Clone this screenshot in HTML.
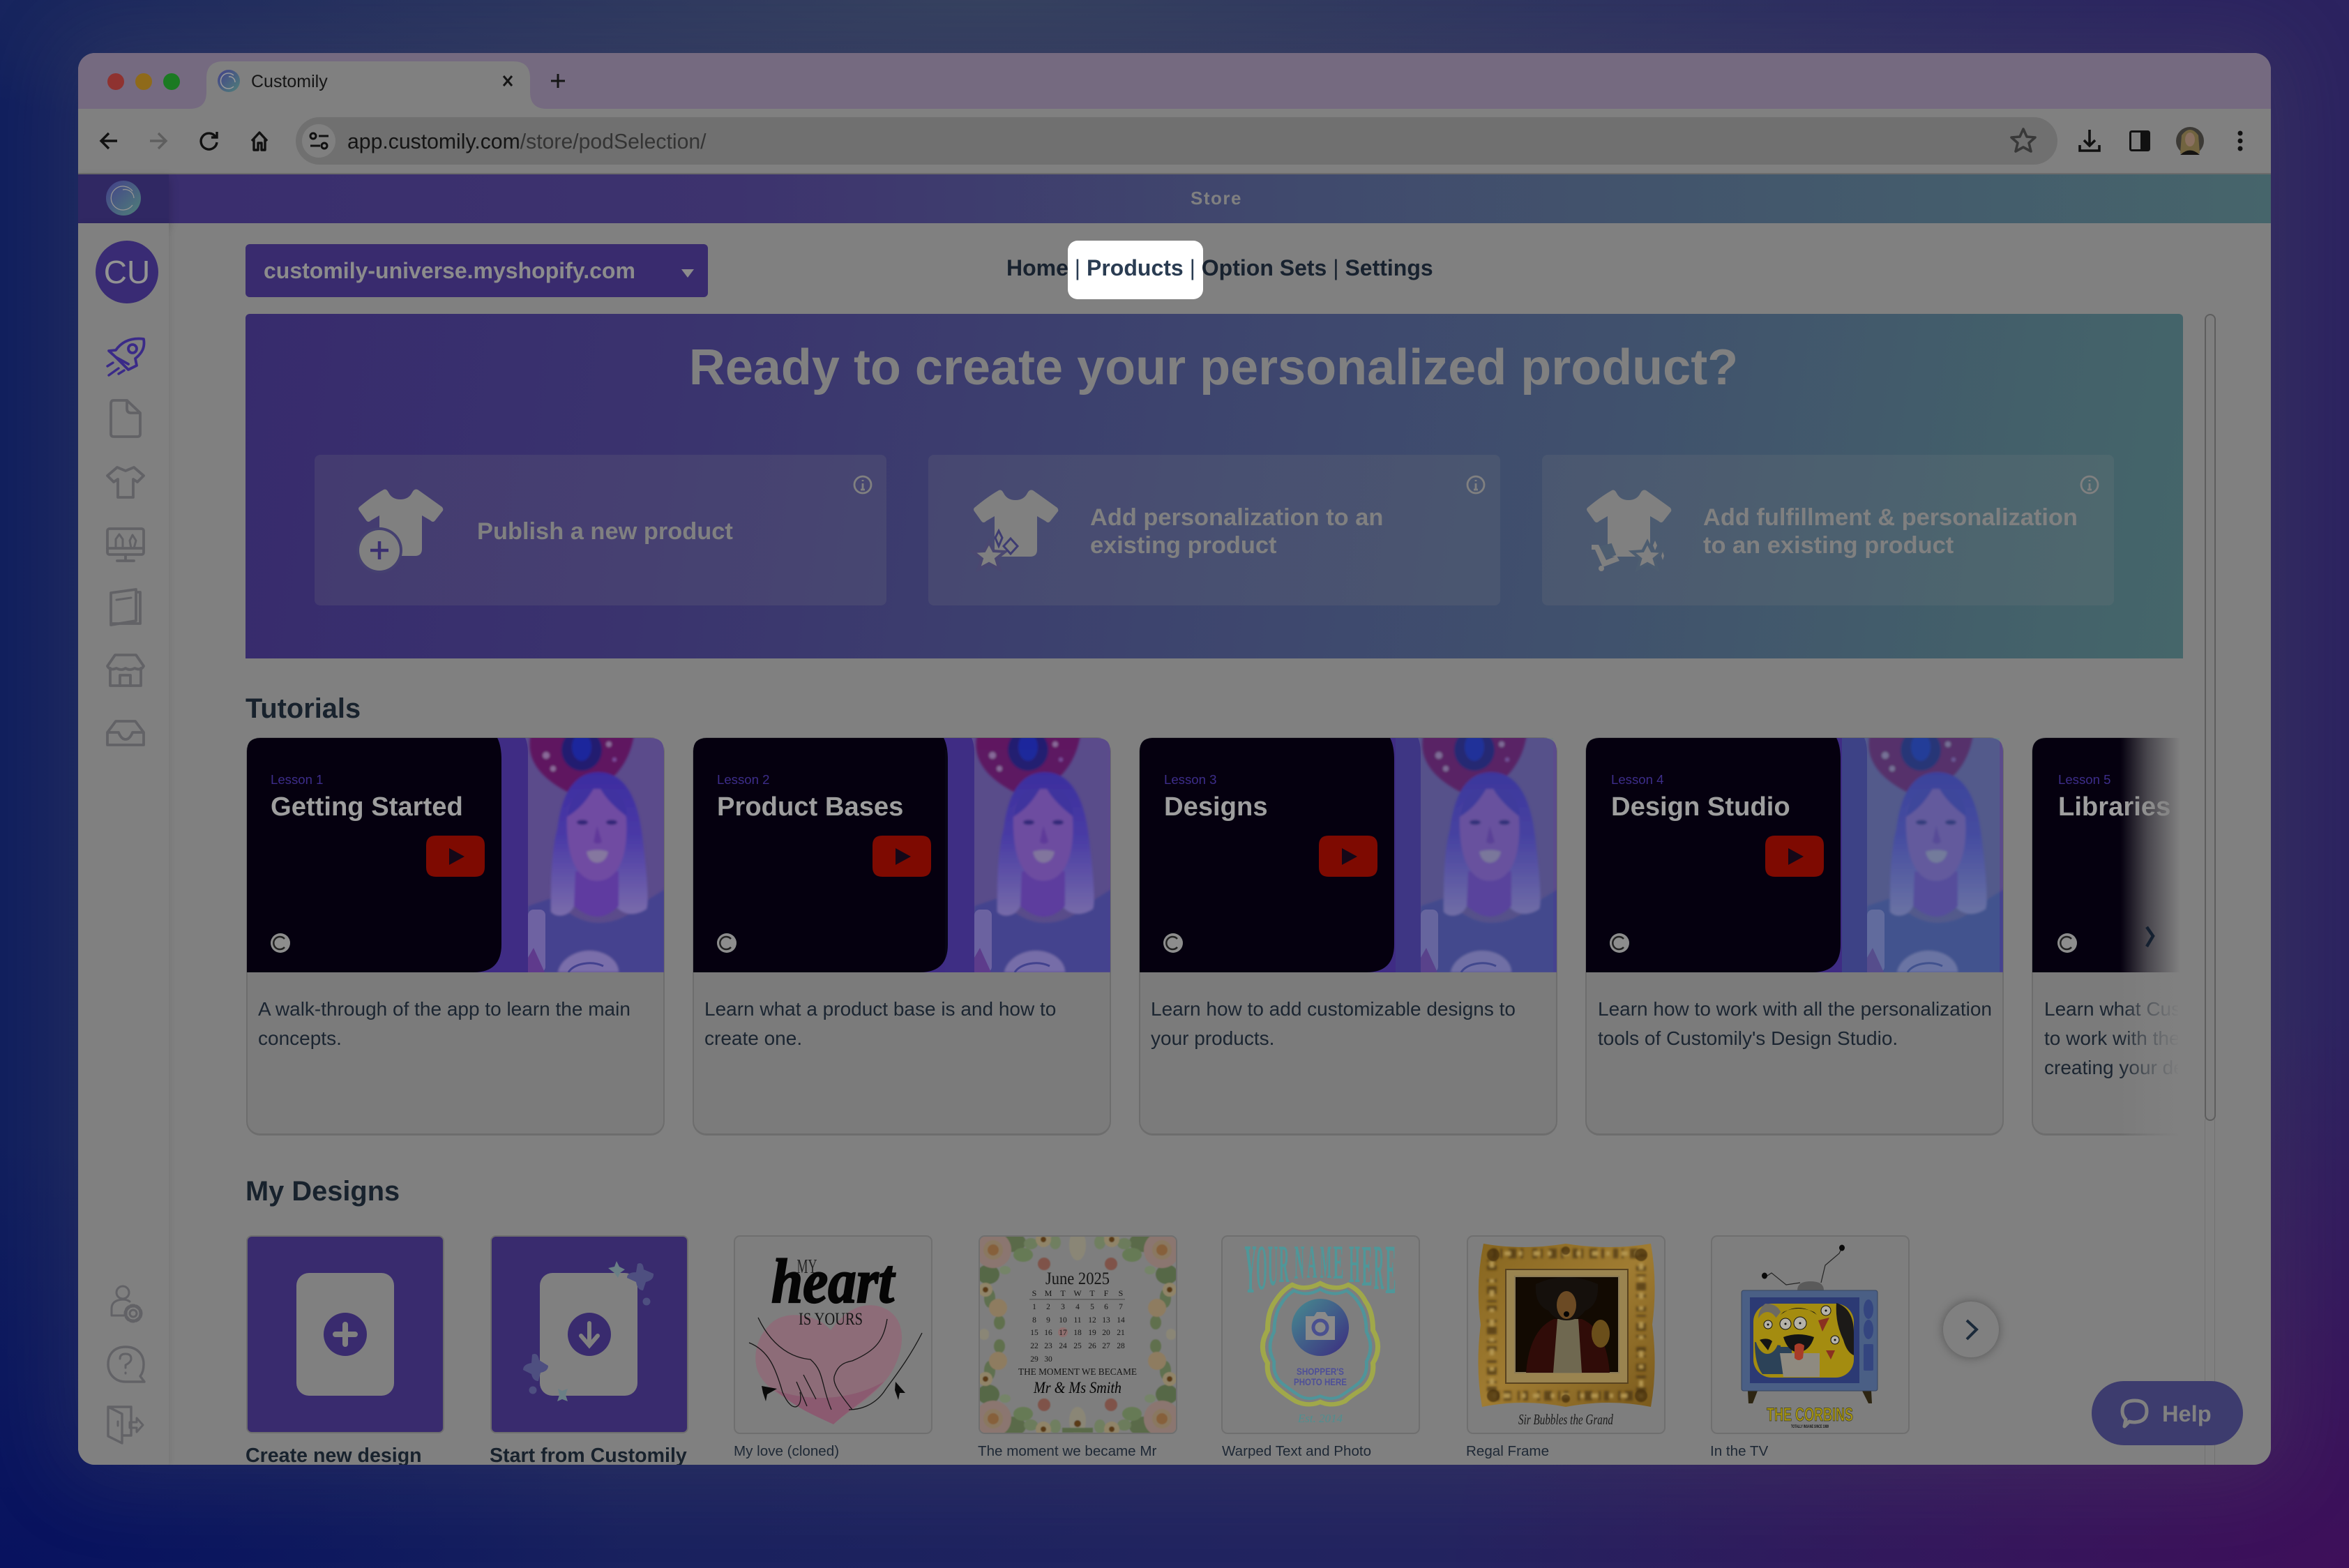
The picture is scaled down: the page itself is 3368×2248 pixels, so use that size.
<!DOCTYPE html>
<html lang="en"><head><meta charset="utf-8"><title>Customily</title>
<style>
html,body{margin:0;padding:0;width:3368px;height:2248px;overflow:hidden}
body{position:relative;font-family:"Liberation Sans",Arial,sans-serif;background:
radial-gradient(900px 620px at 0% 100%,#08125f 0%,rgba(8,18,95,0) 100%),
radial-gradient(1300px 800px at 100% 100%,#3e0f5a 0%,rgba(62,15,90,0) 100%),
radial-gradient(1700px 260px at 42% 0%,#34405f 0%,rgba(52,64,95,0) 100%),
linear-gradient(90deg,#111f5e 0%,#212460 50%,#2c2360 100%)}
.win{position:absolute;left:112px;top:76px;width:3144px;height:2024px;border-radius:24px;overflow:hidden;box-shadow:0 0 120px 24px rgba(105,105,105,.2)}
.in{position:absolute;left:-112px;top:-76px;width:3368px;height:2248px;background:#808080}
.a{position:absolute;white-space:nowrap}
.card{position:absolute;top:1057px;width:596px;height:566px;border:2px solid #6d6d6d;border-bottom-width:3px;border-radius:20px;background:#7b7b7b}
.d{font-size:28px;line-height:42px;color:#1b2531}
.lt{font-size:18.6px;line-height:24px;color:#3d2d8a}
.tt{font-size:38.2px;font-weight:bold;line-height:46px;color:#9e9e9e}
.h2{font-size:39.8px;font-weight:bold;line-height:50px;color:#18222d}
.hc{position:absolute;top:652px;width:820px;height:216px;background:rgba(128,128,128,.17);border-radius:8px}
.ht{font-size:34.4px;font-weight:bold;line-height:40px;color:#808080}
.lb{font-size:20.6px;line-height:28px;color:#1e2835}
.lbb{font-size:28.6px;font-weight:bold;line-height:36px;color:#18222d}
</style></head><body>
<div class="win"><div class="in">

<!-- chrome -->
<div class="a" style="left:112px;top:76px;width:3144px;height:80px;background:#756a80"></div>
<div class="a" style="left:112px;top:156px;width:3144px;height:92px;background:#808080;border-radius:16px 16px 0 0"></div>
<div class="a" style="left:112px;top:248px;width:3144px;height:2px;background:#6c6c6c"></div>
<div class="a" style="left:424px;top:168px;width:2526px;height:68px;background:#707070;border-radius:34px"></div>
<div class="a" style="left:433px;top:178px;width:48px;height:48px;background:#808080;border-radius:50%"></div>

<!-- store bar -->
<div class="a" style="left:112px;top:250px;width:3144px;height:70px;background:linear-gradient(90deg,#392d6e 0%,#3d336e 30%,#40496d 55%,#43586c 78%,#46656b 100%)"></div>
<div class="a" style="left:112px;top:250px;width:130px;height:70px;background:#302863;box-shadow:0 6px 14px rgba(0,0,0,.2)"></div>
<div class="a" style="left:1600px;top:264px;width:288px;text-align:center;font-size:26px;letter-spacing:1.5px;font-weight:bold;line-height:40px;color:#808080">Store</div>

<!-- sidebar -->
<div class="a" style="left:112px;top:320px;width:130px;height:1780px;background:#808080;box-shadow:2px 0 8px rgba(0,0,0,.08)"></div>
<div class="a" style="left:137px;top:345px;width:90px;height:90px;border-radius:50%;background:#392b74;color:#939393;font-size:46px;line-height:90px;text-align:center">CU</div>

<!-- store select -->
<div class="a" style="left:352px;top:350px;width:663px;height:76px;background:#392b6e;border-radius:6px"></div>
<div class="a" style="left:378px;top:367px;font-size:32px;font-weight:bold;line-height:42px;color:#8c8c8c">customily-universe.myshopify.com</div>
<div class="a" style="left:977px;top:386px;width:0;height:0;border-left:9px solid transparent;border-right:9px solid transparent;border-top:12px solid #8c8c8c"></div>

<!-- nav -->
<div class="a" style="left:1531px;top:345px;width:194px;height:84px;background:#fff;border-radius:14px"></div>
<div class="a" style="left:1443px;top:364px;font-size:32px;font-weight:bold;line-height:40px;color:#18222f">Home <span style="font-weight:normal;color:#2a3c52">|</span> <span style="color:#2a3c52">Products</span> <span style="font-weight:normal;color:#2a3c52">|</span> Option Sets <span style="font-weight:normal">|</span> Settings</div>

<!-- hero -->
<div class="a" style="left:352px;top:450px;width:2778px;height:494px;border-radius:6px 6px 0 0;background:linear-gradient(100deg,#372b6d 0%,#3a336e 22%,#3d446e 48%,#40516d 70%,#43606a 90%,#45666a 100%)"></div>
<div class="a" style="left:352px;top:487px;width:2776px;text-align:center;font-size:72px;font-weight:bold;line-height:80px;color:#808080">Ready to create your personalized product?</div>
<div class="hc" style="left:451px"></div><div class="hc" style="left:1331px"></div><div class="hc" style="left:2211px"></div>
<div class="a ht" style="left:684px;top:742px">Publish a new product</div>
<div class="a ht" style="left:1563px;top:722px">Add personalization to an<br>existing product</div>
<div class="a ht" style="left:2442px;top:722px">Add fulfillment &amp; personalization<br>to an existing product</div>

<!-- tutorials -->
<div class="a h2" style="left:352px;top:991px">Tutorials</div>
<div class="card" style="left:353px"></div><div class="card" style="left:993px"></div><div class="card" style="left:1633px"></div><div class="card" style="left:2273px"></div>
<div class="card" style="left:2913px;width:212px;border-right:none;border-radius:20px 0 0 20px"></div>

<!-- my designs -->
<div class="a h2" style="left:352px;top:1683px">My Designs</div>
<div class="a" style="left:353px;top:1771px;width:280px;height:280px;border:2px solid #6e6e6e;border-radius:8px;background:#392b6e"></div>
<div class="a" style="left:703px;top:1771px;width:280px;height:280px;border:2px solid #6e6e6e;border-radius:8px;background:#392b6e"></div>
<div class="a" style="left:425px;top:1825px;width:140px;height:176px;background:#808080;border-radius:18px"></div>
<div class="a" style="left:774px;top:1825px;width:140px;height:176px;background:#808080;border-radius:18px"></div>

<!-- all graphics -->
<svg class="a" style="left:0;top:0" width="3368" height="2248" viewBox="0 0 3368 2248" xmlns="http://www.w3.org/2000/svg" font-family="Liberation Sans, Arial, sans-serif">
<defs>
<filter id="soft" x="-10%" y="-10%" width="120%" height="120%"><feGaussianBlur stdDeviation="1.6"/></filter>
<filter id="soft2" x="-10%" y="-10%" width="120%" height="120%"><feGaussianBlur stdDeviation=".7"/></filter>
<clipPath id="cardclip"><rect x="2" y="2" width="281" height="281" rx="7"/></clipPath>
<linearGradient id="hairg" x1="0" y1="0" x2="0" y2="1"><stop offset="0" stop-color="#3c2ca0"/><stop offset=".45" stop-color="#4a3aa6"/><stop offset="1" stop-color="#7a6cab"/></linearGradient>
<linearGradient id="favg" x1="0" y1="0" x2="1" y2="1"><stop offset="0" stop-color="#43408a"/><stop offset="1" stop-color="#4f8078"/></linearGradient>
<linearGradient id="camg" x1="0" y1="0" x2="1" y2="1"><stop offset="0" stop-color="#478c90"/><stop offset="1" stop-color="#3b2c80"/></linearGradient>
<linearGradient id="goldg" x1="0" y1="0" x2="1" y2="1"><stop offset="0" stop-color="#86651f"/><stop offset=".5" stop-color="#a07c32"/><stop offset="1" stop-color="#7a5a1c"/></linearGradient>
<symbol id="thumb" viewBox="1 -1 598 336" width="598" height="336" overflow="hidden">
 <rect y="-1" width="600" height="336" fill="#5b4b8b"/>
 <g filter="url(#soft)">
 <path d="M408 -6C398 40 438 66 472 82C505 78 548 50 556 -6Z" fill="#5f1460"/>
 <ellipse cx="481" cy="16" rx="29" ry="30" fill="#241a70"/><ellipse cx="481" cy="12" rx="14" ry="20" fill="#1f259c"/>
 <circle cx="430" cy="24" r="5" fill="#8a6a9a"/><circle cx="440" cy="43" r="4" fill="#8a6a9a"/><circle cx="520" cy="8" r="4" fill="#8a6a9a"/><circle cx="528" cy="30" r="3" fill="#7a4a9a"/>
 <path d="M404 240L440 228Q470 264 505 264Q540 264 565 238L600 216V335H404Z" fill="#44428f"/>
 <path d="M437 248C436 190 440 150 446 130C452 80 470 48 505 48C545 48 562 90 568 140C574 190 578 230 574 244C560 254 540 254 530 240L470 240C465 254 445 258 437 248Z" fill="url(#hairg)"/>
 <path d="M472 190H534V240Q505 270 470 240Z" fill="#5e3aa0"/>
 <path d="M460 110C462 85 478 72 503 72C530 72 543 90 545 115C548 165 535 204 503 204C472 204 458 165 460 110Z" fill="#6f4ba2"/>
 <path d="M460 112C480 100 490 85 498 72C480 70 462 84 460 112Z" fill="#4030a0"/>
 <path d="M546 112C530 100 515 85 508 72C530 70 544 84 546 112Z" fill="#4030a0"/>
 <ellipse cx="482" cy="120" rx="8" ry="3.5" fill="#302878"/><ellipse cx="524" cy="120" rx="8" ry="3.5" fill="#302878"/>
 <path d="M503 125L498 148Q504 153 510 148Z" fill="#60389a"/>
 <path d="M488 162Q504 157 519 162Q516 177 503 178Q491 177 488 162Z" fill="#85779f"/>
 <path d="M447 335C450 318 470 304 492 304C515 304 534 318 534 335Z" fill="#7a6eaa"/>
 </g>
 <rect x="404" y="245" width="25" height="90" rx="8" fill="#6e62a2"/>
 <path d="M462 335C470 322 495 318 512 326" fill="none" stroke="#43418f" stroke-width="3"/>
 <path d="M392 335L412 300L428 335Z" fill="#5f3a8c"/>
 <path d="M-20 -20H364Q404 -20 404 20V335H-20Z" fill="#3f2c84"/>
 <path d="M-20 -20H326Q366 -20 366 30V295Q366 335 326 335H-20Z" fill="#05000f"/>
 <path d="M272 139H328Q342 139 342 153V184Q342 198 328 198H272Q258 198 258 184V153Q258 139 272 139Z" fill="#7e0a01"/>
 <path d="M291 157L313 169L291 181Z" fill="#140818"/>
 <circle cx="49" cy="293" r="14" fill="#8d8d8d"/><path d="M55 287A9 9 0 1 0 55 299" fill="none" stroke="#222" stroke-width="2.5"/>
 <path d="M1 -1H20Q1 -1 1 18Z" fill="#808080"/><path d="M599 -1V18Q599 -1 580 -1Z" fill="#808080"/>
</symbol>
<g id="fq">
 <ellipse cx="48" cy="10" rx="20" ry="14" fill="#5a6a48"/><ellipse cx="64" cy="28" rx="14" ry="10" fill="#667a54"/><ellipse cx="14" cy="56" rx="16" ry="14" fill="#566846"/><ellipse cx="16" cy="90" rx="8" ry="14" fill="#5e7050"/><ellipse cx="30" cy="125" rx="8" ry="10" fill="#60704e"/><ellipse cx="75" cy="12" rx="10" ry="8" fill="#6c7c5c"/><ellipse cx="110" cy="10" rx="8" ry="10" fill="#6f7f60"/><ellipse cx="38" cy="50" rx="8" ry="6" fill="#748468"/>
 <circle cx="21" cy="21" r="26" fill="#8b7670"/><circle cx="21" cy="21" r="14" fill="#8a7860"/><circle cx="21" cy="21" r="8" fill="#86603a"/>
 <circle cx="93" cy="6" r="11" fill="#908468"/><circle cx="93" cy="6" r="4" fill="#5a3a18"/><circle cx="10" cy="78" r="10" fill="#908468"/><circle cx="10" cy="78" r="4" fill="#5a3a18"/>
 <circle cx="94" cy="41" r="9" fill="#7f5248"/><circle cx="28" cy="104" r="13" fill="#8e7c60"/><circle cx="8" cy="141" r="7" fill="#8a8676"/>
</g>
<path id="star" d="M0 -20L6 -7L20 -6L9 4L13 19L0 11L-13 19L-9 4L-20 -6L-6 -7Z"/>
<path id="shirt" d="M36 1Q40 -1 43 5Q48 15 60 15Q72 15 77 5Q80 -1 85 1Q95 8 120 26Q122 29 121 31L110 45Q107 49 103 45L91 38V86Q91 96 81 96H30V38L18 45Q14 49 11 45L1 31Q-1 28 1 26Q20 10 36 1Z"/>
</defs>

<!-- window chrome graphics -->
<path d="M112 156H272Q296 156 296 132V112Q296 88 320 88H736Q760 88 760 112V132Q760 156 784 156H800V160H112Z" fill="#808080"/>
<circle cx="166" cy="117" r="12" fill="#8f3230"/><circle cx="206" cy="117" r="12" fill="#8f6a1a"/><circle cx="246" cy="117" r="12" fill="#1b7a22"/>
<circle cx="328" cy="116" r="16" fill="url(#favg)"/><path d="M335 108A11 11 0 1 0 335 124M328 110A8 8 0 0 1 337 118" fill="none" stroke="#9a9a9a" stroke-width="1.5"/>
<text x="360" y="125" font-size="25" fill="#151515">Customily</text>
<path d="M722 109L734 123M734 109L722 123" stroke="#151515" stroke-width="3"/>
<path d="M800 106V126M790 116H810" stroke="#151515" stroke-width="3"/>
<g fill="none" stroke="#111" stroke-width="3.4">
<path d="M168 202H146M156 191L145 202L156 213"/>
<path d="M215 202H237M227 191L238 202L227 213" stroke="#5e5e5e"/>
<path d="M309 196A11.5 11.5 0 1 0 311 204M311 189V197H303"/>
<path d="M361 202L372 190L383 202M364 199V215H370V205H375V215H380V199" stroke-linejoin="round"/>
<circle cx="449" cy="195" r="4" stroke-width="3"/><path d="M457 195H471M445 209H459" stroke-width="3"/><circle cx="465" cy="209" r="4" stroke-width="3"/>
</g>
<text x="498" y="213" font-size="30.2" fill="#141414">app.customily.com<tspan fill="#343434">/store/podSelection/</tspan></text>
<polygon points="2901,185 2906,196 2918,197 2909,205 2912,217 2901,211 2890,217 2893,205 2884,197 2896,196" fill="none" stroke="#383838" stroke-width="3.6" stroke-linejoin="round"/>
<g fill="none" stroke="#111" stroke-width="3.6"><path d="M2996 186V208M2988 201L2996 209L3004 201"/><path d="M2982 208V216H3010V208"/></g>
<rect x="3054.500" y="188.500" width="27" height="27" rx="2" fill="#808080" stroke="#111" stroke-width="3"/><rect x="3069" y="188" width="13" height="28" fill="#111"/>
<circle cx="3140" cy="202" r="20" fill="#3c3a36"/><path d="M3128 194Q3140 178 3152 194L3154 220H3126Z" fill="#726440"/><ellipse cx="3140" cy="200" rx="7" ry="10" fill="#8a7060"/><path d="M3126 222Q3140 209 3154 222Z" fill="#151311"/>
<circle cx="3212" cy="191" r="3.5" fill="#111"/><circle cx="3212" cy="202" r="3.5" fill="#111"/><circle cx="3212" cy="213" r="3.5" fill="#111"/>

<!-- sidebar logo -->
<circle cx="177" cy="284" r="25" fill="url(#favg)"/><path d="M190 274A17 17 0 1 0 190 294M176 272A13 13 0 0 1 192 284" fill="none" stroke="#949494" stroke-width="1.3"/>

<!-- sidebar icons -->
<g fill="none" stroke="#626266" stroke-width="3.8" stroke-linejoin="round" stroke-linecap="round">
<g stroke="#3a2a88">
<path d="M206 486C190 484 176 488 166 502L156 503L166 512L176 522L184 530L196 524L194 514C204 506 208 498 206 486Z"/>
<circle cx="190" cy="500" r="6"/><path d="M166 512L184 522"/><path d="M154 525L162 520M156 538L170 528M170 536L178 531" stroke-width="3.4"/>
</g>
<path d="M182 574H163Q159 574 159 579V622Q159 626 163 626H197Q201 626 201 622V592ZM182 574V586Q182 592 188 592H201"/>
<path d="M168 670L180 675L192 670L206 682L197 691L191 687V713H169V687L163 691L154 682Z"/>
<rect x="154" y="758" width="52" height="37" rx="3"/><path d="M154 786H206M180 795V803M168 804H192"/><path d="M166 786V773L171 766L176 773V786M188 786L186 775L190 767L195 775L192 786" stroke-width="3"/>
<path d="M159 850L195 845V890L159 896ZM195 849H201V894H159"/><path d="M167 860L188 857" stroke-width="3"/>
<path d="M165 939H195L206 955Q202 962 193 958Q186 962 180 958Q174 962 167 958Q158 962 154 955Z"/><path d="M158 958V983H202V958"/><path d="M172 983V968H187V983"/>
<path d="M166 1034H194L206 1050V1068H154V1050ZM154 1050H170Q174 1060 180 1060Q186 1060 190 1050H206"/>
<circle cx="176" cy="1853" r="9" stroke-width="3"/><path d="M178 1886H160V1876Q160 1864 176 1863Q182 1863 186 1866" stroke-width="3"/><circle cx="191" cy="1883" r="5" stroke-width="3"/><circle cx="191" cy="1883" r="11" stroke-dasharray="5 3" stroke-width="5"/>
<path d="M180 1931C164 1931 155 1941 155 1956C155 1971 166 1981 180 1981H207L201 1973C205 1968 206 1962 206 1956C206 1941 196 1931 180 1931Z" stroke-width="3.400"/>
<path d="M172 1948Q172 1941 180 1941Q188 1941 188 1948Q188 1953 180 1957V1961M180 1968V1969" stroke-width="3"/>
<path d="M155 2017H188V2058H175M155 2017L175 2027V2069L155 2059Z" stroke-width="3.400"/><path d="M169 2038V2044" stroke-width="3"/><path d="M186 2039H196V2033L205 2043L196 2053V2047H186Z" stroke-width="3"/>
</g>

<!-- hero icons -->
<g fill="#808080">
<use href="#shirt" x="514" y="701"/>
<use href="#shirt" x="1396" y="702"/>
<use href="#shirt" x="2275" y="702"/>
<circle cx="544" cy="789" r="33" fill="#454070"/><circle cx="544" cy="789" r="29"/>
</g>
<path d="M544 776V802M531 789H557" stroke="#3a2f70" stroke-width="4.500"/>
<g fill="#808080">
<use href="#star" transform="translate(1418,797) scale(1.150,1)" stroke="#4a4770" stroke-width="4"/>
<path d="M1432 761L1437 771L1432 783L1427 771Z M1449 772L1459 783L1449 794L1439 783Z" stroke="#3e3c72" stroke-width="3"/>
<use href="#star" transform="translate(2362,797) scale(1.100,1)" stroke="#4d5d70" stroke-width="4"/>
<path d="M2373 775L2376 782L2373 789L2370 782ZM2384 791L2386 797L2384 803L2382 797Z"/>
<path d="M2282 781H2292L2303 803L2318 797L2322 804L2298 813L2287 788H2282Z"/><circle cx="2296" cy="815" r="4"/>
<path d="M2295 784L2310 780L2316 795L2303 800Z" stroke="#4d5d70" stroke-width="2" fill="#4d5d70"/>
</g>
<g fill="none" stroke="#808080" stroke-width="2.800">
<circle cx="1237" cy="695" r="12"/><path d="M1237 693V702M1234 702H1240M1237 688V690"/>
<circle cx="2116" cy="695" r="12"/><path d="M2116 693V702M2113 702H2119M2116 688V690"/>
<circle cx="2996" cy="695" r="12"/><path d="M2996 693V702M2993 702H2999M2996 688V690"/>
</g>

<!-- tutorial thumbs -->
<use href="#thumb" x="354" y="1058"/>
<use href="#thumb" x="994" y="1058"/>
<use href="#thumb" x="1634" y="1058"/>
<use href="#thumb" x="2274" y="1058"/>
<rect x="1355" y="1075" width="232" height="319" fill="#3c6a80" opacity=".05"/>
<rect x="2001" y="1058" width="226" height="336" fill="#3c7a88" opacity=".14"/>
<rect x="2641" y="1058" width="226" height="336" fill="#3c8a90" opacity=".24"/>
<path d="M2914 1078Q2914 1058 2934 1058H3130V1394H2914Z" fill="#05000f"/>
<circle cx="2964" cy="1352" r="14" fill="#8d8d8d"/><path d="M2970 1346A9 9 0 1 0 2970 1358" fill="none" stroke="#222" stroke-width="2.500"/>

<!-- blobs, plus & arrow -->
<circle cx="495" cy="1913" r="31" fill="#392b6e"/><path d="M495 1899V1927M481 1913H509" stroke="#808080" stroke-width="8" stroke-linecap="round"/>
<circle cx="845" cy="1913" r="31" fill="#392b6e"/><path d="M845 1897V1926M833 1915L845 1929L857 1915" fill="none" stroke="#808080" stroke-width="6" stroke-linecap="round"/>
<g fill="#4e4f80"><path d="M914 1812Q922 1808 923 1820L937 1826Q938 1835 926 1838L922 1850Q914 1850 912 1838L899 1832Q899 1824 912 1824Z"/><circle cx="927" cy="1866" r="5.500"/><path d="M763 1942Q771 1938 773 1950L786 1958Q786 1966 775 1968L772 1980Q764 1980 762 1970L750 1964Q750 1956 762 1954Z"/><circle cx="764" cy="1993" r="5.500"/></g>
<g fill="#6a7f85"><path d="M884 1808L888 1816L896 1820L889 1825L886 1832L881 1825L872 1818L881 1816Z"/><path d="M800 1991L806 1994L814 1991L811 2000L814 2009L806 2006L799 2009L802 2000Z"/></g>

<!-- design 3: My love -->
<g transform="translate(1052,1771)">
<rect x="1" y="1" width="283" height="283" rx="8" fill="#7e7e7e" stroke="#6f6f6f" stroke-width="2"/>
<path d="M139 136C120 112 70 105 50 130C30 150 25 185 40 205C60 235 110 245 143 271C165 250 215 225 232 185C248 150 245 110 205 101C175 96 155 115 139 136Z" fill="#8d6c78"/>
<path d="M60 222C90 248 115 258 143 271C165 250 195 232 215 210C170 236 110 240 60 222Z" fill="#8b5a70"/>
<text x="0" y="0" text-anchor="middle" font-family="Liberation Serif,serif" font-size="24" fill="#222" transform="translate(105,54) scale(.75,1.2)">MY</text>
<text x="0" y="0" text-anchor="middle" font-family="Liberation Serif,serif" font-style="italic" font-weight="bold" font-size="62" fill="#050505" stroke="#050505" stroke-width="1.5" textLength="176" lengthAdjust="spacingAndGlyphs" transform="translate(142,96) scale(1,1.450)">heart</text>
<text x="0" y="0" text-anchor="middle" font-family="Liberation Serif,serif" font-size="22" fill="#151515" textLength="92" lengthAdjust="spacingAndGlyphs" transform="translate(139,128) scale(1,1.150)">IS YOURS</text>
<g fill="none" stroke="#151515" stroke-width="1.300">
<path d="M35 118C50 150 75 175 110 178C130 195 125 215 140 250M220 120C215 150 205 165 170 180C160 182 150 185 145 200C140 210 150 225 170 250M22 154C50 165 60 190 70 225C85 260 100 245 95 225M270 140C250 180 225 210 215 225C200 245 180 250 165 250M90 210L105 245M100 200L118 235"/>
</g>
<path d="M40 216L62 220L48 228L46 238L42 226Z M232 210L246 226L238 226L236 236L231 222Z" fill="#0a0a0a"/>
</g>

<!-- design 4: Calendar -->
<g transform="translate(1403,1771)">
<rect x="1" y="1" width="283" height="283" rx="8" fill="#7e7e7e" stroke="#6f6f6f" stroke-width="2"/>
<g clip-path="url(#cardclip)">
<g filter="url(#soft2)">
<use href="#fq"/>
<use href="#fq" transform="translate(284,0) scale(-1,1)"/>
<use href="#fq" transform="translate(0,284) scale(1,-1)"/>
<use href="#fq" transform="translate(284,284) scale(-1,-1)"/>
<ellipse cx="142" cy="14" rx="12" ry="22" fill="#8a8676"/><ellipse cx="142" cy="266" rx="12" ry="20" fill="#8a8676"/><circle cx="142" cy="270" r="5" fill="#5a3a18"/>
<rect x="120" y="276" width="44" height="7" fill="#5a6a48"/>
</g>
</g>
<g font-family="Liberation Serif,serif" text-anchor="middle" fill="#161616">
<text x="142" y="70" font-size="25" textLength="92" lengthAdjust="spacingAndGlyphs">June 2025</text>
<g font-size="12"><text x="80" y="87">S</text><text x="100" y="87">M</text><text x="121" y="87">T</text><text x="142" y="87">W</text><text x="163" y="87">T</text><text x="183" y="87">F</text><text x="204" y="87">S</text></g>
<rect x="73" y="91" width="137" height="1.500" fill="#5a5a5a"/>
<circle cx="121" cy="139" r="7" fill="#8f6f6f"/>
<g font-size="11.500">
<text x="80" y="106">1</text><text x="100" y="106">2</text><text x="121" y="106">3</text><text x="142" y="106">4</text><text x="163" y="106">5</text><text x="183" y="106">6</text><text x="204" y="106">7</text>
<text x="80" y="125">8</text><text x="100" y="125">9</text><text x="121" y="125">10</text><text x="142" y="125">11</text><text x="163" y="125">12</text><text x="183" y="125">13</text><text x="204" y="125">14</text>
<text x="80" y="143">15</text><text x="100" y="143">16</text><text x="121" y="143">17</text><text x="142" y="143">18</text><text x="163" y="143">19</text><text x="183" y="143">20</text><text x="204" y="143">21</text>
<text x="80" y="162">22</text><text x="100" y="162">23</text><text x="121" y="162">24</text><text x="142" y="162">25</text><text x="163" y="162">26</text><text x="183" y="162">27</text><text x="204" y="162">28</text>
<text x="80" y="181">29</text><text x="100" y="181">30</text>
</g>
<text x="142" y="200" font-size="14" textLength="170" lengthAdjust="spacingAndGlyphs">THE MOMENT WE BECAME</text>
<text x="142" y="226" font-size="23" font-style="italic" fill="#050505" textLength="126" lengthAdjust="spacingAndGlyphs">Mr &amp; Ms Smith</text>
</g>
</g>

<!-- design 5: Warped -->
<g transform="translate(1751,1771)">
<rect x="1" y="1" width="283" height="283" rx="8" fill="#7e7e7e" stroke="#6f6f6f" stroke-width="2"/>
<g font-family="Liberation Serif,serif" font-weight="bold" font-size="28" fill="#4f9799" text-anchor="middle">
<text transform="translate(42,82) scale(.85,3.6)">Y</text><text transform="translate(58,77) scale(.72,3.28)">O</text><text transform="translate(74,71) scale(.72,3)">U</text><text transform="translate(90,67) scale(.72,2.76)">R</text>
<text transform="translate(112,62) scale(.72,2.49)">N</text><text transform="translate(130,61) scale(.72,2.43)">A</text><text transform="translate(150,61) scale(.62,2.43)">M</text><text transform="translate(168,62) scale(.8,2.49)">E</text>
<text transform="translate(191,67) scale(.72,2.76)">H</text><text transform="translate(209,72) scale(.8,3)">E</text><text transform="translate(226,77) scale(.72,3.28)">R</text><text transform="translate(243,83) scale(.8,3.62)">E</text>
</g>
<g fill="none" transform="translate(142,156) scale(1.180,1.050) translate(-142,-154)">
<path d="M142 71Q160 82 176 73Q190 80 197 96Q206 110 206 135Q218 158 206 180Q208 200 195 214Q180 224 172 232Q156 240 142 233Q128 240 112 232Q100 224 90 214Q76 200 78 180Q66 158 78 135Q78 110 87 96Q96 80 108 73Q124 82 142 71Z" stroke="#a0a84a" stroke-width="6"/>
<path d="M142 79Q158 90 174 81Q184 88 190 100Q198 114 198 137Q208 158 198 178Q200 196 188 208Q176 218 168 224Q156 232 142 225Q128 232 116 224Q108 218 96 208Q84 196 86 178Q76 158 86 137Q86 114 94 100Q100 88 110 81Q126 90 142 79Z" stroke="#4f959a" stroke-width="4"/>
</g>
<circle cx="142" cy="132" r="41" fill="url(#camg)"/>
<path d="M121 116H133L137 110H149L153 116H163V150H121Z" fill="#8a8a8a"/><circle cx="142" cy="132" r="10" fill="none" stroke="#4a5090" stroke-width="5"/>
<g text-anchor="middle" font-weight="bold" fill="#4e4f98"><text x="142" y="200" font-size="14" textLength="68" lengthAdjust="spacingAndGlyphs">SHOPPER'S</text><text x="142" y="215" font-size="14" textLength="76" lengthAdjust="spacingAndGlyphs">PHOTO HERE</text></g>
<text x="142" y="268" text-anchor="middle" font-family="Liberation Serif,serif" font-style="italic" font-size="17" fill="#4f8f90">Est. 2014</text>
</g>

<!-- design 6: Frame -->
<g transform="translate(2103,1771)">
<rect x="1" y="1" width="283" height="283" rx="8" fill="#7e7e7e" stroke="#6f6f6f" stroke-width="2"/>
<path d="M24 12Q80 22 142 12Q204 22 264 12Q274 70 266 128Q274 190 264 246Q204 234 142 246Q80 234 22 246Q12 190 20 128Q12 70 24 12Z" fill="url(#goldg)"/>
<g filter="url(#soft)" fill="none">
<rect x="36" y="26" width="214" height="204" stroke="#4a3414" stroke-width="14" stroke-dasharray="7 5 3 9 11 6 4 13" opacity=".7"/>
<rect x="36" y="26" width="214" height="204" stroke="#b3954f" stroke-width="6" stroke-dasharray="5 17 9 11" stroke-dashoffset="4"/>
</g>
<g fill="#4a3310" opacity=".75" filter="url(#soft2)"><circle cx="38" cy="28" r="9"/><circle cx="250" cy="28" r="9"/><circle cx="38" cy="230" r="9"/><circle cx="250" cy="230" r="9"/><circle cx="142" cy="22" r="6"/><circle cx="142" cy="234" r="6"/></g>
<rect x="56" y="49" width="175" height="163" fill="#9a8450" stroke="#5a4420" stroke-width="2"/>
<rect x="69" y="59" width="149" height="138" fill="#120a02" stroke="#8a7a55" stroke-width="2"/>
<path d="M85 197Q90 135 125 120H165Q200 135 205 197Z" fill="#300c08"/>
<ellipse cx="192" cy="141" rx="13" ry="20" fill="#6a4e1a"/>
<path d="M124 197L130 120H160L165 197Z" fill="#6f6850"/>
<path d="M99 70Q142 50 188 70Q190 100 170 108Q160 122 143 122Q127 122 117 108Q97 100 99 70Z" fill="#15100c"/>
<ellipse cx="143" cy="100" rx="14" ry="20" fill="#6b4a24"/><circle cx="143" cy="113" r="4" fill="#050505"/>
<text x="142" y="271" text-anchor="middle" font-family="Liberation Serif,serif" font-style="italic" font-size="21" fill="#1c1c1c" textLength="136" lengthAdjust="spacingAndGlyphs">Sir Bubbles the Grand</text>
</g>

<!-- design 7: TV -->
<g transform="translate(2453,1771)">
<rect x="1" y="1" width="283" height="283" rx="8" fill="#7e7e7e" stroke="#6f6f6f" stroke-width="2"/>
<path d="M53 223L54 241H60L67 223ZM217 223L226 241H231L230 223Z" fill="#2d2512"/>
<path d="M158 68L164 43L184 26L188 18M128 68L108 71L87 54L78 60" fill="none" stroke="#252525" stroke-width="1.200"/>
<ellipse cx="188" cy="18" rx="4" ry="4.500" fill="#0a0a0a"/><ellipse cx="77" cy="58" rx="4" ry="4.500" fill="#0a0a0a"/>
<path d="M124 79Q124 66 143 66Q162 66 162 79Z" fill="#5a5a5a"/>
<rect x="44" y="79" width="195" height="144" rx="3" fill="#4a5f85" stroke="#36455f" stroke-width="1"/>
<rect x="56" y="89" width="157" height="123" fill="#2c3a74"/>
<rect x="61" y="98" width="144" height="106" rx="26" fill="#a48c10"/>
<path d="M63 153L116 160V199H74Q63 185 63 153Z" fill="#2c4258"/>
<path d="M78 98Q95 98 100 110L92 120H68Q68 106 78 98Z" fill="#6c6a62"/>
<ellipse cx="81" cy="140" rx="18" ry="30" fill="#a48c10"/>
<path d="M99 120Q100 99 125 99Q150 99 152 120V160H100Z" fill="#a48c10"/>
<path d="M100 114Q125 94 152 114L148 110Q125 100 104 110Z" fill="#141414"/>
<path d="M99 169H156V203H104Z" fill="#8e8a80"/>
<path d="M180 97Q205 105 205 140V172Q195 168 190 150Q178 125 180 97Z" fill="#1c1a18"/>
<g fill="#b5b2a8" stroke="#0f0f0f" stroke-width="1"><circle cx="82" cy="128" r="6"/><circle cx="107" cy="127" r="8"/><circle cx="128" cy="126" r="9"/><circle cx="165" cy="108" r="7"/><circle cx="178" cy="150" r="6"/></g>
<g fill="#0f0f0f"><circle cx="82" cy="128" r="1.500"/><circle cx="107" cy="127" r="1.500"/><circle cx="128" cy="126" r="1.500"/><circle cx="165" cy="108" r="1.500"/><circle cx="178" cy="150" r="1.500"/></g>
<path d="M104 146Q125 138 148 146Q142 166 125 168Q110 166 104 146Z" fill="#141414"/><path d="M120 158Q126 152 134 158L132 176Q126 182 120 176Z" fill="#a83c28"/>
<path d="M70 150Q82 146 88 152L82 165Z" fill="#141414"/><path d="M154 122L160 138L170 118Z" fill="#8a3020"/><path d="M165 165L172 178L178 165Z" fill="#8a3020"/>
<ellipse cx="226" cy="106" rx="7" ry="14" fill="#34457f"/><ellipse cx="226" cy="135" rx="7" ry="14" fill="#34457f"/><rect x="219" y="156" width="14" height="38" rx="2" fill="#34457f"/>
<text x="142" y="266" text-anchor="middle" font-weight="bold" font-size="27" fill="#a8960f" stroke="#3a3a20" stroke-width=".8" textLength="124" lengthAdjust="spacingAndGlyphs">THE CORBINS</text>
<text x="142" y="276" text-anchor="middle" font-weight="bold" font-size="6.500" fill="#151515" textLength="54" lengthAdjust="spacingAndGlyphs">TOTALLY INSANE SINCE 1989</text>
</g>

<circle cx="2826" cy="1906" r="40" fill="#808080" style="filter:drop-shadow(0 0 7px rgba(0,0,0,.35))"/>
<path d="M2820 1893L2834 1906L2820 1920" fill="none" stroke="#1b2a3a" stroke-width="4"/>
</svg>

<!-- thumbnail text -->
<div class="a lt" style="left:388px;top:1106px">Lesson 1</div><div class="a tt" style="left:388px;top:1134px">Getting Started</div>
<div class="a lt" style="left:1028px;top:1106px">Lesson 2</div><div class="a tt" style="left:1028px;top:1134px">Product Bases</div>
<div class="a lt" style="left:1669px;top:1106px">Lesson 3</div><div class="a tt" style="left:1669px;top:1134px">Designs</div>
<div class="a lt" style="left:2310px;top:1106px">Lesson 4</div><div class="a tt" style="left:2310px;top:1134px">Design Studio</div>
<div class="a lt" style="left:2951px;top:1106px">Lesson 5</div><div class="a tt" style="left:2951px;top:1134px">Libraries</div>

<div class="a d" style="left:370px;top:1426px">A walk-through of the app to learn the main<br>concepts.</div>
<div class="a d" style="left:1010px;top:1426px">Learn what a product base is and how to<br>create one.</div>
<div class="a d" style="left:1650px;top:1426px">Learn how to add customizable designs to<br>your products.</div>
<div class="a d" style="left:2291px;top:1426px">Learn how to work with all the personalization<br>tools of Customily's Design Studio.</div>
<div class="a d" style="left:2931px;top:1426px;width:192px;overflow:hidden">Learn what Customily<br>to work with them<br>creating your designs</div>

<!-- fade -->
<div class="a" style="left:3040px;top:1050px;width:86px;height:590px;background:linear-gradient(90deg,rgba(128,128,128,0) 0%,rgba(128,128,128,.55) 45%,#808080 100%)"></div>
<div class="a" style="left:3125px;top:1050px;width:32px;height:590px;background:#808080"></div>
<svg class="a" style="left:3070px;top:1325px" width="24" height="36" viewBox="0 0 24 36"><path d="M8 4L17 17L8 32" fill="none" stroke="#142030" stroke-width="4.500"/></svg>

<!-- scrollbar -->
<div class="a" style="left:3161px;top:1600px;width:13px;height:510px;border:1px solid #727272;border-radius:8px"></div>
<div class="a" style="left:3161px;top:450px;width:12px;height:1153px;background:#7f7f7f;border:2px solid #5e5e5e;border-radius:8px"></div>

<!-- design labels -->
<div class="a lbb" style="left:352px;top:2069px">Create new design</div>
<div class="a lbb" style="left:702px;top:2069px">Start from Customily</div>
<div class="a lb" style="left:1052px;top:2067px">My love (cloned)</div>
<div class="a lb" style="left:1402px;top:2067px">The moment we became Mr</div>
<div class="a lb" style="left:1752px;top:2067px">Warped Text and Photo</div>
<div class="a lb" style="left:2102px;top:2067px">Regal Frame</div>
<div class="a lb" style="left:2452px;top:2067px">In the TV</div>

<!-- help -->
<div class="a" style="left:2999px;top:1980px;width:217px;height:92px;border-radius:46px;background:#3d3c6e"></div>
<svg class="a" style="left:3040px;top:2003px" width="44" height="46" viewBox="0 0 44 46"><path d="M6 42L8 32Q3 27 3 20Q3 5 21 5Q38 5 38 20Q38 35 21 36Q16 36 13 35Z" fill="none" stroke="#808080" stroke-width="5" stroke-linejoin="round"/></svg>
<div class="a" style="left:3100px;top:2006px;font-size:32.600px;font-weight:bold;line-height:42px;color:#808080">Help</div>

</div></div>
</body></html>
